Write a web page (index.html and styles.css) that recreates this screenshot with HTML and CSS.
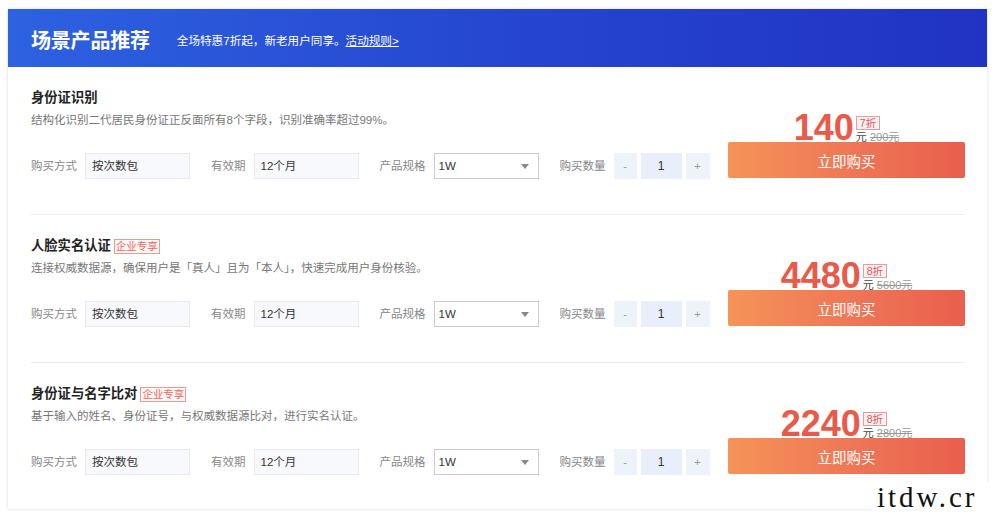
FILE: index.html
```html
<!DOCTYPE html>
<html lang="zh-CN">
<head>
<meta charset="utf-8">
<title>场景产品推荐</title>
<link rel="stylesheet" href="styles.css">
</head>
<body>
<div class="page">
  <div class="card">
    <div class="banner">
      <h1 class="banner-title">场景产品推荐</h1>
      <p class="promo">全场特惠7折起，新老用户同享。<a class="rule-link" href="#">活动规则&gt;</a></p>
    </div>

    <div class="section">
      <div class="info">
        <div class="title-row"><h2 class="title">身份证识别</h2></div>
        <p class="desc">结构化识别二代居民身份证正反面所有8个字段，识别准确率超过99%。</p>
        <div class="form">
          <div class="field"><span class="label">购买方式</span><div class="input">按次数包</div></div>
          <div class="field"><span class="label">有效期</span><div class="input">12个月</div></div>
          <div class="field"><span class="label">产品规格</span><div class="select"><span>1W</span><i class="caret"></i></div></div>
          <div class="field"><span class="label">购买数量</span>
            <div class="qty"><span class="qbtn">-</span><span class="qval">1</span><span class="qbtn qplus">+</span></div>
          </div>
        </div>
      </div>
      <div class="buy">
        <div class="price"><span class="num">140</span><span class="meta"><span class="off">7折</span><span class="orig">元 <s>200元</s></span></span></div>
        <button class="buy-btn">立即购买</button>
      </div>
    </div>

    <div class="section">
      <div class="info">
        <div class="title-row"><h2 class="title">人脸实名认证</h2><span class="tag">企业专享</span></div>
        <p class="desc">连接权威数据源，确保用户是「真人」且为「本人」，快速完成用户身份核验。</p>
        <div class="form">
          <div class="field"><span class="label">购买方式</span><div class="input">按次数包</div></div>
          <div class="field"><span class="label">有效期</span><div class="input">12个月</div></div>
          <div class="field"><span class="label">产品规格</span><div class="select"><span>1W</span><i class="caret"></i></div></div>
          <div class="field"><span class="label">购买数量</span>
            <div class="qty"><span class="qbtn">-</span><span class="qval">1</span><span class="qbtn qplus">+</span></div>
          </div>
        </div>
      </div>
      <div class="buy">
        <div class="price"><span class="num">4480</span><span class="meta"><span class="off">8折</span><span class="orig">元 <s>5600元</s></span></span></div>
        <button class="buy-btn">立即购买</button>
      </div>
    </div>

    <div class="section last">
      <div class="info">
        <div class="title-row"><h2 class="title">身份证与名字比对</h2><span class="tag">企业专享</span></div>
        <p class="desc">基于输入的姓名、身份证号，与权威数据源比对，进行实名认证。</p>
        <div class="form">
          <div class="field"><span class="label">购买方式</span><div class="input">按次数包</div></div>
          <div class="field"><span class="label">有效期</span><div class="input">12个月</div></div>
          <div class="field"><span class="label">产品规格</span><div class="select"><span>1W</span><i class="caret"></i></div></div>
          <div class="field"><span class="label">购买数量</span>
            <div class="qty"><span class="qbtn">-</span><span class="qval">1</span><span class="qbtn qplus">+</span></div>
          </div>
        </div>
      </div>
      <div class="buy">
        <div class="price"><span class="num">2240</span><span class="meta"><span class="off">8折</span><span class="orig">元 <s>2800元</s></span></span></div>
        <button class="buy-btn">立即购买</button>
      </div>
    </div>
  </div>
  <div class="watermark">itdw.cr</div>
</div>
</body>
</html>
```

FILE: styles.css
```css
* { box-sizing: border-box; }
html, body { margin: 0; padding: 0; background: #fff; }
body {
  font-family: "Liberation Sans", "Noto Sans CJK SC", sans-serif;
  color: #333;
}
.page {
  position: relative;
  padding: 9px 0 0 8px;
  width: 1000px;
  height: 521px;
  overflow: hidden;
}
.card {
  width: 979px;
  background: #fff;
  box-shadow: 0 0 3px rgba(0, 0, 0, 0.16);
}
.banner {
  height: 58px;
  padding: 6px 0 0 23px;
  display: flex;
  align-items: center;
  background: linear-gradient(90deg, #2d62e1 0%, #2544cf 55%, #2133c3 100%);
  color: #fff;
}
.banner-title {
  margin: 0;
  font-size: 20px;
  line-height: 26px;
  font-weight: 700;
  letter-spacing: -0.2px;
}
.promo {
  margin: 0 0 0 27px;
  font-size: 11.6px;
  line-height: 18px;
}
.rule-link { color: #fff; text-decoration: underline; }

.section {
  margin: 0 22px 0 23px;
  height: 148px;
  padding: 21px 0 35px;
  border-bottom: 1px solid #ececec;
  display: flex;
  justify-content: space-between;
  align-items: flex-end;
}
.section.last { border-bottom: 0; height: 146px; padding-bottom: 34px; }
.info { display: flex; flex-direction: column; }
.title-row { display: flex; align-items: center; height: 20px; }
.title {
  margin: 0;
  font-size: 13.3px;
  line-height: 20px;
  font-weight: 700;
  color: #222;
}
.tag {
  margin-left: 3px;
  height: 15px;
  padding: 0 1px;
  border: 1px solid #ee9a93;
  color: #e8675c;
  background: #fff8f7;
  font-size: 10.5px;
  line-height: 13px;
}
.desc {
  margin: 3px 0 0;
  font-size: 11.5px;
  line-height: 18px;
  color: #777;
}
.form { display: flex; margin-top: 24px; height: 26px; }
.field { display: flex; align-items: center; margin-right: 21px; }
.field:last-child { margin-right: 0; }
.label {
  font-size: 11.5px;
  color: #888;
  margin-right: 8px;
  line-height: 26px;
}
.input {
  width: 105px;
  height: 26px;
  border: 1px solid #e7eaf1;
  background: #f8f9fc;
  padding-left: 6px;
  font-size: 11.5px;
  line-height: 24px;
  color: #333;
}
.select {
  width: 105px;
  height: 26px;
  border: 1px solid #c8ccd4;
  background: #fff;
  padding: 0 9px 0 4px;
  display: flex;
  align-items: center;
  justify-content: space-between;
  font-size: 11.5px;
  color: #333;
}
.caret {
  width: 0; height: 0;
  border-left: 4.5px solid transparent;
  border-right: 4.5px solid transparent;
  border-top: 5px solid #888;
}
.qty { display: flex; gap: 4px; height: 26px; }
.qbtn {
  width: 23px;
  background: #eef2f9;
  color: #999;
  font-size: 11px;
  line-height: 26px;
  text-align: center;
}
.qplus { width: 24px; }
.qval {
  width: 41px;
  background: #e8eefa;
  color: #333;
  font-size: 12px;
  line-height: 26px;
  text-align: center;
}

.buy {
  width: 237px;
  display: flex;
  flex-direction: column;
  margin-bottom: 1px;
}
.price {
  height: 30px;
  display: flex;
  justify-content: center;
  align-items: flex-end;
}
.num {
  font-size: 36px;
  line-height: 31px;
  height: 30px;
  font-weight: 700;
  color: #e85a49;
}
.meta {
  display: flex;
  flex-direction: column;
  align-items: flex-start;
  margin-left: 2px;
  margin-bottom: -1px;
}
.off {
  height: 14px;
  padding: 0 3px;
  border: 1px solid #e79aa0;
  background: #fdf0f1;
  color: #e05560;
  font-size: 10.5px;
  line-height: 12px;
}
.orig {
  margin-top: 1px;
  font-size: 11px;
  line-height: 12px;
  color: #444;
}
.orig s { color: #999; }
.buy-btn {
  height: 36px;
  border: 0;
  border-radius: 2px;
  background: linear-gradient(90deg, #f69358 0%, #ee7556 55%, #e95f4c 100%);
  color: #fff;
  font-family: "Liberation Sans", "Noto Sans CJK SC", sans-serif;
  font-size: 14.5px;
  padding: 0;
}

.watermark {
  position: absolute;
  left: 872px;
  top: 482px;
  width: 120px;
  height: 30px;
  padding-left: 5px;
  background: #fff;
  font-family: "Liberation Serif", serif;
  font-size: 29px;
  line-height: 30px;
  letter-spacing: 3px;
  color: #111;
}
```
